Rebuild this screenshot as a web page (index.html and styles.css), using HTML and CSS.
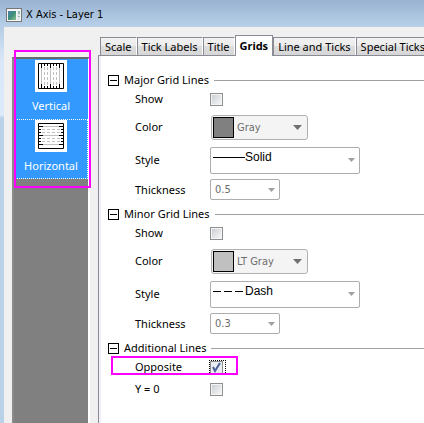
FILE: index.html
```html
<!DOCTYPE html>
<html lang="en">
<head>
<meta charset="utf-8">
<title>X Axis - Layer 1</title>
<link rel="stylesheet" href="styles.css">
</head>
<body>
<div class="window">
  <header class="titlebar">
    <svg class="app-icon" width="16" height="14" viewBox="0 0 16 14" aria-hidden="true">
      <defs><linearGradient id="scene" x1="0" y1="0" x2="1" y2="1"><stop offset="0" stop-color="#4a7fae"/><stop offset=".5" stop-color="#3d8f78"/><stop offset="1" stop-color="#8fc28c"/></linearGradient></defs>
      <rect x=".5" y=".5" width="15" height="13" fill="#f6f6f6" stroke="#777"/>
      <rect x="2" y="3" width="8" height="9" fill="url(#scene)"/>
      <rect x="11" y="3" width="3" height="9" fill="#e4e8ec"/>
      <path d="M13 3v3M13 8v1" stroke="#3d8f78"/>
    </svg>
    <h1 class="title">X Axis - Layer 1</h1>
  </header>
  <main class="dialog">
    <nav class="sidebar" aria-label="Direction">
      <button class="direction" type="button">
        <svg width="32" height="32" viewBox="0 0 32 32" aria-hidden="true">
          <path fill="#fff" d="M0 0h32v32H0z"/>
          <path d="M6.500 5v22M15.500 5v22M24.500 5v22" stroke="#c0c0c0"/>
          <path d="M9.500 7v18M12.500 7v18M18.500 7v18M21.500 7v18" stroke="#c0c0c0" stroke-dasharray="3 2"/>
          <path d="M6.500 4v4M9.500 4v2M12.500 4v2M15.500 4v4M18.500 4v2M21.500 4v2M24.500 4v4M6.500 24v4M9.500 26v2M12.500 26v2M15.500 24v4M18.500 26v2M21.500 26v2M24.500 24v4" stroke="#000"/>
          <path d="M3.500 3.500h25v25h-25z" fill="none" stroke="#000"/>
        </svg>
        <span>Vertical</span>
      </button>
      <button class="direction focused" type="button">
        <svg width="32" height="32" viewBox="0 0 32 32" aria-hidden="true">
          <path fill="#fff" d="M0 0h32v32H0z"/>
          <path d="M5 6.500h22M5 15.500h22M5 24.500h22" stroke="#c0c0c0"/>
          <path d="M7 9.500h18M7 12.500h18M7 18.500h18M7 21.500h18" stroke="#c0c0c0" stroke-dasharray="3 2"/>
          <path d="M4 6.500h4M4 9.500h2M4 12.500h2M4 15.500h4M4 18.500h2M4 21.500h2M4 24.500h4M24 6.500h4M26 9.500h2M26 12.500h2M24 15.500h4M26 18.500h2M26 21.500h2M24 24.500h4" stroke="#000"/>
          <path d="M3.500 3.500h25v25h-25z" fill="none" stroke="#000"/>
        </svg>
        <span>Horizontal</span>
      </button>
      <span class="marker marker-directions"></span>
    </nav>
    <section class="tabs">
      <div class="tablist" role="tablist">
        <button class="tab" type="button" role="tab">Scale</button>
        <button class="tab" type="button" role="tab">Tick Labels</button>
        <button class="tab" type="button" role="tab">Title</button>
        <button class="tab active" type="button" role="tab" aria-selected="true">Grids</button>
        <button class="tab" type="button" role="tab">Line and Ticks</button>
        <button class="tab" type="button" role="tab">Special Ticks</button>
      </div>
      <form class="panel" role="tabpanel">
        <section class="group">
          <h2 class="group-head"><button class="toggle" type="button" aria-label="Collapse"></button>Major Grid Lines</h2>
          <div class="row"><label for="major-show">Show</label><input id="major-show" type="checkbox"></div>
          <div class="row row-color"><label for="major-color">Color</label><span class="color-box"><span class="swatch gray"></span><select id="major-color" disabled><option>Gray</option></select></span></div>
          <div class="row row-style"><label for="major-style">Style</label><span class="style-box"><svg width="32" height="3" viewBox="0 0 32 3" aria-hidden="true"><path d="M0 1.500h32" stroke="#000"/></svg><select id="major-style" disabled><option>Solid</option></select></span></div>
          <div class="row row-thickness"><label for="major-thickness">Thickness</label><select class="thickness" id="major-thickness" disabled><option>0.5</option></select></div>
        </section>
        <section class="group">
          <h2 class="group-head"><button class="toggle" type="button" aria-label="Collapse"></button>Minor Grid Lines</h2>
          <div class="row"><label for="minor-show">Show</label><input id="minor-show" type="checkbox"></div>
          <div class="row row-color"><label for="minor-color">Color</label><span class="color-box"><span class="swatch light"></span><select id="minor-color" disabled><option>LT Gray</option></select></span></div>
          <div class="row row-style"><label for="minor-style">Style</label><span class="style-box"><svg width="32" height="3" viewBox="0 0 32 3" aria-hidden="true"><path d="M0 1.500h8M11 1.500h8M22 1.500h8" stroke="#000"/></svg><select id="minor-style" disabled><option>Dash</option></select></span></div>
          <div class="row row-thickness"><label for="minor-thickness">Thickness</label><select class="thickness" id="minor-thickness" disabled><option>0.3</option></select></div>
        </section>
        <section class="group">
          <h2 class="group-head"><button class="toggle" type="button" aria-label="Collapse"></button>Additional Lines</h2>
          <div class="row"><label for="opposite">Opposite</label><span class="focus-ring"><input id="opposite" type="checkbox" checked></span><span class="marker marker-opposite"></span></div>
          <div class="row"><label for="y-zero">Y = 0</label><input id="y-zero" type="checkbox"></div>
        </section>
      </form>
    </section>
  </main>
</div>
</body>
</html>
```
FILE: styles.css
```css
* { box-sizing: border-box; }

body {
  margin: 0;
  font: 11px/16px "Noto Sans", Tahoma, sans-serif;
  color: #000;
}

button, select, input { font: inherit; margin: 0; }

.window {
  display: flex;
  flex-direction: column;
  height: 100vh;
  overflow: hidden;
  padding-left: 4px;
  background: linear-gradient(#9bb5d3 0, #b5cce5 27px, #d9e8f8 60px, #dceafa 115px, #bad1ea 118px);
}

.titlebar {
  flex: none;
  display: flex;
  align-items: center;
  gap: 4px;
  height: 27px;
  margin-left: -4px;
  padding: 3px 0 0 6px;
  background: linear-gradient(#98b2d0, #b8d0e9);
}

.title {
  margin: 0;
  font-family: "DejaVu Sans Condensed", Tahoma, sans-serif;
  font-size: 11px;
  font-weight: normal;
}

.dialog {
  flex: 1;
  display: flex;
  gap: 8px;
  min-height: 0;
  padding: 8px 0 0 8px;
  background: #f0f0f0;
}

.sidebar {
  position: relative;
  flex: none;
  width: 78px;
  margin-top: 22px;
  border: 2px solid #696969;
  border-left-color: #8a8a8a;
  border-right-color: #fff;
  border-bottom: 0;
  background: #808080;
}

.direction {
  display: flex;
  flex-direction: column;
  align-items: center;
  gap: 6px;
  width: 100%;
  height: 60px;
  padding: 1px 0 0;
  border: 0;
  background: #3399ff;
  color: #fff;
}

.focused { outline: 1px dotted #fff; outline-offset: -1px; }

.marker {
  position: absolute;
  border: 2px solid #ff00ff;
  pointer-events: none;
}

.marker-directions { inset: -9px -3px auto 0; height: 138px; }
.marker-opposite { top: 0; left: 3px; width: 127px; height: 19px; }

.tabs {
  flex: 1;
  display: flex;
  flex-direction: column;
  min-width: 0;
}

.tablist {
  display: flex;
  align-items: flex-end;
  height: 20px;
  padding-left: 2px;
}

.tab {
  flex: none;
  height: 18px;
  padding: 0 4px;
  border: 1px solid #898c95;
  border-right-color: #fff;
  border-bottom: 0;
  background: linear-gradient(#f2f2f2 0, #ebebeb 50%, #dddddd 50%, #d6d6d6 100%);
  white-space: nowrap;
  line-height: 16px;
}

.active {
  position: relative;
  height: 21px;
  margin-bottom: -1px;
  border-right-color: #898c95;
  background: #fff;
  font-weight: bold;
}

.panel {
  flex: 1;
  padding: 16px 0 0 9px;
  border: 1px solid #898c95;
  border-right: 0;
  border-bottom: 0;
  background: #fff;
  box-shadow: inset 2px 0 #f1f0fa;
}

.group { margin-bottom: 3px; }

.group-head {
  display: flex;
  align-items: center;
  gap: 5px;
  height: 16px;
  margin: 0;
  font-size: 11px;
  font-weight: normal;
}

.group-head::after {
  content: "";
  flex: 1;
  height: 1px;
  background: #a0a0a0;
}

.toggle {
  flex: none;
  width: 11px;
  height: 11px;
  padding: 0;
  border: 1px solid #000;
  background: linear-gradient(#000, #000) center / 7px 1px no-repeat #fff;
}

.row {
  position: relative;
  display: grid;
  grid-template-columns: 75px auto;
  justify-content: start;
  align-items: center;
  height: 22px;
  padding-left: 27px;
}

.row-color { height: 34px; }
.row-style { height: 32px; }
.row-thickness { height: 27px; }

input[type="checkbox"] {
  appearance: none;
  display: block;
  width: 13px;
  height: 13px;
  border: 1px solid #8e8f8f;
  background: linear-gradient(135deg, #cbcfd5, #f6f6f6) center / 9px 9px no-repeat #f4f4f4;
}

input[type="checkbox"]:checked {
  background: url("data:image/svg+xml,%3Csvg xmlns='http://www.w3.org/2000/svg' viewBox='0 0 11 11'%3E%3Cpath d='M2 5l2 4L9 1' fill='none' stroke='%234b609d' stroke-width='2'/%3E%3C/svg%3E") center / 11px 11px no-repeat #e9ecf1;
}

.focus-ring { padding-right: 2px; outline: 1px dotted #000; outline-offset: 0; }

select {
  appearance: none;
  border: 0;
  border-radius: 0;
  padding: 0;
  background: none;
  color: #6d6d6d;
  opacity: 1;
}

.color-box {
  display: flex;
  align-items: center;
  gap: 3px;
  width: 97px;
  height: 25px;
  margin-left: 1px;
  padding-left: 1px;
  border: 1px solid #adb2b5;
  border-radius: 3px;
  background: #f4f4f4;
}

.swatch {
  flex: none;
  width: 21px;
  height: 21px;
  border: 1px solid #000;
}

.gray { background: #808080; }
.light { background: #c0c0c0; }

.color-box select {
  flex: 1;
  height: 100%;
  background: url("data:image/svg+xml,%3Csvg xmlns='http://www.w3.org/2000/svg' viewBox='0 0 9 5'%3E%3Cpath d='M0 0h9L4.500 5z' fill='%23707070'/%3E%3C/svg%3E") right 5px center / 9px 5px no-repeat;
}

.color-box select, .thickness { font-family: "DejaVu Sans Condensed", Tahoma, sans-serif; }

.color-box select { padding-top: 1px; }

.style-box, .thickness {
  border: 1px solid #adadad;
  border-radius: 2px;
  background-color: #fff;
}

.style-box {
  display: flex;
  width: 150px;
  height: 27px;
  padding-left: 2px;
}

.style-box svg { flex: none; margin-top: 8px; }

.style-box select, .thickness {
  background-image: url("data:image/svg+xml,%3Csvg xmlns='http://www.w3.org/2000/svg' viewBox='0 0 7 4'%3E%3Cpath d='M0 0h7L3.500 4z' fill='%23a0a0a0'/%3E%3C/svg%3E");
  background-repeat: no-repeat;
  background-size: 7px 4px;
  background-position: right 4px center;
}

.style-box select {
  flex: 1;
  padding-bottom: 7px;
  color: #000;
  font-family: "Liberation Sans", Arial, sans-serif;
  font-size: 12px;
}

.thickness {
  width: 70px;
  height: 21px;
  padding-left: 4px;
}
```
